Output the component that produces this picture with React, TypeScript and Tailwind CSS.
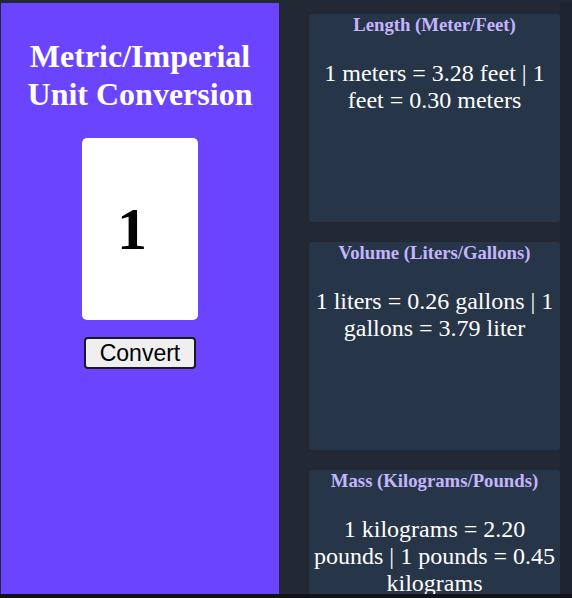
import React from "react";

const cards = [
  { title: "Length (Meter/Feet)", text: "1 meters = 3.28 feet | 1 feet = 0.30 meters" },
  { title: "Volume (Liters/Gallons)", text: "1 liters = 0.26 gallons | 1 gallons = 3.79 liter" },
  { title: "Mass (Kilograms/Pounds)", text: "1 kilograms = 2.20 pounds | 1 pounds = 0.45 kilograms" },
];

export default function App() {
  return (
    <div className="w-[572px] h-[598px] bg-[#111317] overflow-hidden" style={{ fontFamily: '"Liberation Serif", serif' }}>
      <div className="h-[594px] bg-[#222834] flex pt-[3px] pl-px overflow-hidden">
        <div className="w-[278px] shrink-0 bg-[#6a44ff] flex flex-col items-center pt-[34px]">
          <h1 className="text-[32px] leading-[38px] font-bold text-white text-center">
            Metric/Imperial
            <br />
            Unit Conversion
          </h1>
          <div className="mt-[25px] w-[116px] h-[182px] bg-white rounded-[5px] flex items-center justify-center pr-[16px]">
            <span className="text-[60px] font-bold text-black leading-none" style={{ fontFamily: '"Liberation Serif", serif' }}>1</span>
          </div>
          <button
            className="mt-[17px] w-[112px] h-[32px] bg-[#efefef] border-2 border-[#1a1a1a] rounded-[4px] text-[23px] text-black leading-none flex items-center justify-center"
            style={{ fontFamily: '"Liberation Sans", Arial, sans-serif' }}
          >
            Convert
          </button>
        </div>
        <div className="flex-1 flex">
          <div className="ml-[30px] w-[251px] shrink-0 flex flex-col gap-[20px] pt-[11px]">
            {cards.map((c) => (
              <div key={c.title} className="h-[208px] shrink-0 bg-[#273548] rounded-[3px] pt-0 px-[3px] text-center">
                <h3 className="text-[18.72px] leading-[21.5px] font-bold text-[#c4b5fd]">{c.title}</h3>
                <p className="mt-[24px] text-[24px] leading-[27px] text-white">{c.text}</p>
              </div>
            ))}
          </div>
          <div className="flex-1 bg-[#1f2530]" />
        </div>
      </div>
    </div>
  );
}
